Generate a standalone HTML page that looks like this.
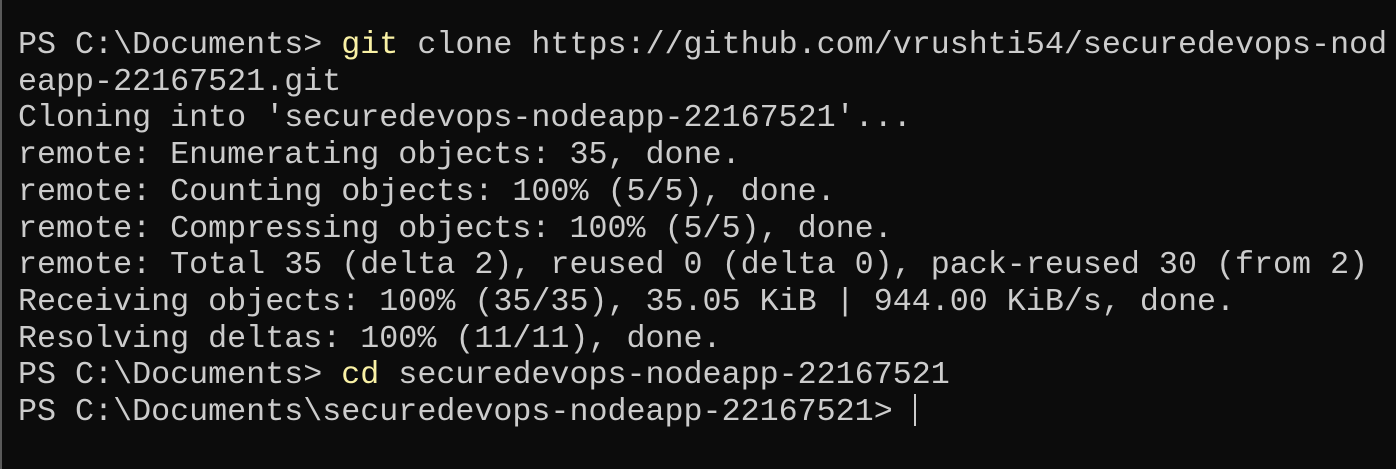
<!DOCTYPE html>
<html><head><style>
html,body{margin:0;padding:0;width:1396px;height:469px;overflow:hidden;background:#0c0c0c;}
.b{position:absolute;left:0;top:0;width:2px;height:469px;background:#5a5a5a;}
pre{position:absolute;left:18px;top:27px;margin:0;font-family:"Liberation Mono",monospace;font-size:31.7px;line-height:36.7px;color:#cccccc;white-space:pre;}
.y{color:#f9f1a5;}
.c{display:inline-block;width:2px;height:32px;background:#cccccc;vertical-align:-6px;margin-left:2px;}
</style></head><body><div class="b"></div><pre>PS C:\Documents&gt; <span class="y">git</span> clone https://github.com/vrushti54/securedevops-nod
eapp-22167521.git
Cloning into 'securedevops-nodeapp-22167521'...
remote: Enumerating objects: 35, done.
remote: Counting objects: 100% (5/5), done.
remote: Compressing objects: 100% (5/5), done.
remote: Total 35 (delta 2), reused 0 (delta 0), pack-reused 30 (from 2)
Receiving objects: 100% (35/35), 35.05 KiB | 944.00 KiB/s, done.
Resolving deltas: 100% (11/11), done.
PS C:\Documents&gt; <span class="y">cd</span> securedevops-nodeapp-22167521
PS C:\Documents\securedevops-nodeapp-22167521&gt; <span class="c"></span></pre></body></html>
